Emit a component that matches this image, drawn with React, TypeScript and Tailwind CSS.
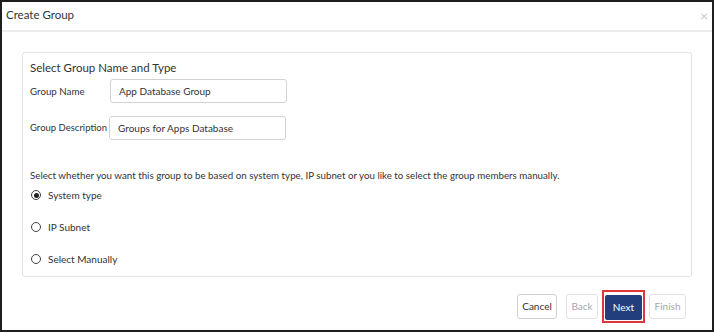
import React from 'react';

const font = { fontFamily: 'Lato, "Noto Sans", "Liberation Sans", sans-serif' };

type RadioProps = { label: string; checked?: boolean };

const Radio: React.FC<RadioProps> = ({ label, checked }) => (
  <label className="flex items-center h-[12px] gap-[7px] pl-[1px]">
    <span className="w-[10px] h-[10px] rounded-full border border-[#444] flex items-center justify-center bg-white">
      {checked && <span className="w-[5px] h-[5px] rounded-full bg-[#222]"></span>}
    </span>
    <span className="text-[10px] text-[#333]">{label}</span>
  </label>
);

export default function App() {
  return (
    <div className="w-[714px] h-[332px] border-2 border-[#1e1e1e] bg-white flex flex-col" style={font}>
      {/* Header */}
      <div className="h-[30px] border-b-2 border-[#ececec] flex items-center justify-between pl-[4px] pr-[4px] shrink-0">
        <h1 className="text-[11.5px] text-[#333] -mt-[2px]">Create Group</h1>
        <span className="text-[14px] leading-none text-[#c8c8c8]">×</span>
      </div>

      {/* Body */}
      <div className="px-[20px] pt-[20px]">
        <div className="h-[225px] border border-[#e3e3e3] rounded-[3px] pl-[7px] pt-[6px]">
          <h2 className="text-[11.5px] text-[#333] leading-[17px]">Select Group Name and Type</h2>
          <div className="flex items-center mt-[3px]">
            <span className="w-[80px] whitespace-nowrap text-[9.75px] text-[#333]">Group Name</span>
            <input
              readOnly
              value="App Database Group"
              className="w-[177px] h-[24px] border border-[#d2d2d2] rounded-[3px] px-[8px] text-[10px] text-[#333] outline-none"
            />
          </div>
          <div className="flex items-center mt-[13px]">
            <span className="w-[79px] whitespace-nowrap text-[9.5px] text-[#333]">Group Description</span>
            <input
              readOnly
              value="Groups for Apps Database"
              className="w-[177px] h-[24px] border border-[#d2d2d2] rounded-[3px] px-[8px] text-[10px] text-[#333] outline-none"
            />
          </div>
          <p className="text-[9.75px] text-[#333] mt-[28px] leading-[14px] whitespace-nowrap">
            Select whether you want this group to be based on system type, IP subnet or you like to select the group members manually.
          </p>
          <div className="flex flex-col gap-[20px] mt-[7px]">
            <Radio label="System type" checked />
            <Radio label="IP Subnet" />
            <Radio label="Select Manually" />
          </div>
        </div>
      </div>

      {/* Footer */}
      <div className="flex justify-end items-center pr-[26px] mt-[13px]">
        <button className="h-[25px] w-[40px] border border-[#d0d0d0] rounded-[3px] bg-white text-[10px] text-[#333]">Cancel</button>
        <button className="h-[25px] w-[32px] ml-[9px] border border-[#e2e2e2] rounded-[3px] bg-white text-[10px] text-[#a8a8a8]">Back</button>
        <div className="border-2 border-[#e0363b] ml-[4px] p-[1px]">
          <button className="h-[25px] w-[37px] bg-[#233e7d] rounded-[2px] text-[10px] text-white">Next</button>
        </div>
        <button className="h-[25px] w-[37px] ml-[4px] border border-[#e2e2e2] rounded-[3px] bg-white text-[10px] text-[#a8a8a8]">Finish</button>
      </div>
    </div>
  );
}
